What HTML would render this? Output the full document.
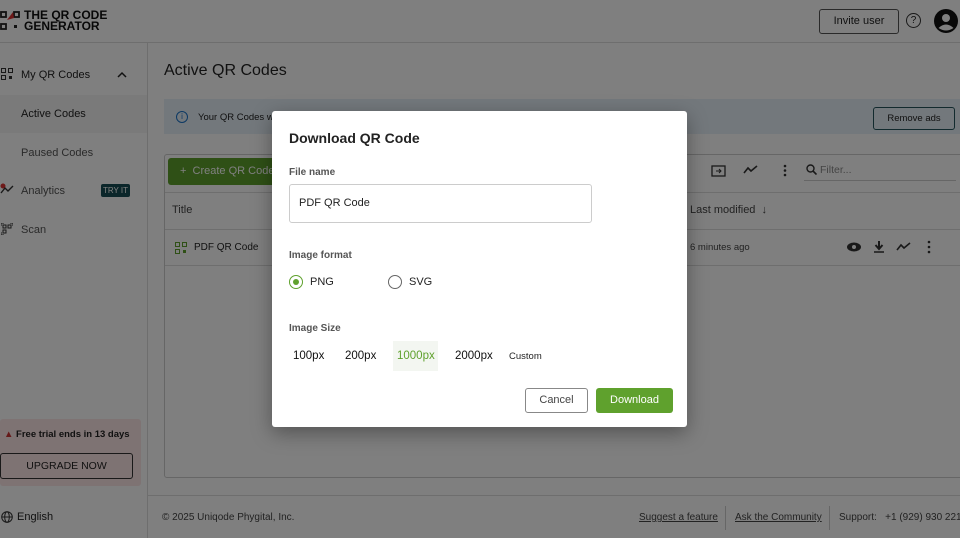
<!DOCTYPE html>
<html><head><meta charset="utf-8"><style>
*{box-sizing:border-box;margin:0;padding:0}
body{width:960px;height:538px;overflow:hidden;font-family:"Liberation Sans",sans-serif;background:#fff;position:relative;color:#222}
.abs{position:absolute;white-space:nowrap}
.hdr{left:0;top:0;width:960px;height:43px;border-bottom:1px solid #ddd}
.side{left:0;top:43px;width:148px;height:495px;border-right:1px solid #ddd}
.foot{left:148px;top:495px;width:812px;height:43px;border-top:1px solid #ddd;font-size:10px;color:#444}
.ov{left:0;top:0;width:960px;height:538px;background:rgba(0,0,0,0.5)}
.modal{left:272px;top:111px;width:415px;height:316px;background:#fff;border-radius:3px;box-shadow:0 6px 20px rgba(0,0,0,.35)}
.lbl{font-size:10px;font-weight:bold;color:#555}
.sz{font-size:11.5px;color:#111}
</style></head><body>
<div class="abs hdr">
 <svg class="abs" style="left:0;top:11px" width="22" height="20" viewBox="0 0 22 20"><rect x="1" y="1" width="5" height="5" fill="none" stroke="#222" stroke-width="1.8"/><rect x="14" y="1" width="5" height="5" fill="none" stroke="#222" stroke-width="1.8"/><rect x="1" y="13" width="5" height="5" fill="none" stroke="#222" stroke-width="1.8"/><rect x="14" y="14" width="3" height="3" fill="#222"/><path d="M7 9 L13 1 L14 7Z" fill="#d33"/></svg>
 <div class="abs" style="left:24px;top:10px;font-size:12px;font-weight:bold;line-height:11px;color:#111">THE QR CODE<br>GENERATOR</div>
 <div class="abs" style="left:819px;top:9px;width:80px;height:25px;border:1px solid #555;border-radius:3px;font-size:11px;text-align:center;line-height:23px">Invite user</div>
 <div class="abs" style="left:906px;top:13px;width:15px;height:15px;border:1.3px solid #333;border-radius:50%;font-size:10px;text-align:center;line-height:13px">?</div>
 <svg class="abs" style="left:934px;top:9px" width="24" height="24" viewBox="0 0 24 24"><circle cx="12" cy="12" r="12" fill="#111"/><circle cx="12" cy="9" r="4" fill="#fff"/><path d="M4.5 19 Q12 12 19.5 19 Q12 24 4.5 19Z" fill="#fff"/></svg>
</div>
<div class="abs side">
 <div class="abs" style="left:21px;top:26px;font-size:11px">My QR Codes</div>
 <svg class="abs" style="left:1px;top:25px" width="12" height="12"><rect x="0.5" y="0.5" width="4" height="4" fill="none" stroke="#333"/><rect x="7.5" y="0.5" width="4" height="4" fill="none" stroke="#333"/><rect x="0.5" y="7.5" width="4" height="4" fill="none" stroke="#333"/><rect x="8" y="8" width="3" height="3" fill="#333"/></svg>
 <svg class="abs" style="left:117px;top:28px" width="10" height="7"><path d="M1 6 L5 2 L9 6" fill="none" stroke="#222" stroke-width="1.5"/></svg>
 <div class="abs" style="left:0;top:52px;width:147px;height:38px;background:#f4f4f4"></div>
 <div class="abs" style="left:21px;top:65px;font-size:11px">Active Codes</div>
 <div class="abs" style="left:21px;top:104px;font-size:11px;color:#555">Paused Codes</div>
 <div class="abs" style="left:21px;top:142px;font-size:11px;color:#555">Analytics</div>
 <div class="abs" style="left:101px;top:141px;width:29px;height:13px;background:#174d54;color:#fff;font-size:8px;text-align:center;line-height:13px;border-radius:2px">TRY IT</div>
 <svg class="abs" style="left:0;top:140px" width="14" height="12"><circle cx="3" cy="3" r="2.5" fill="#d33"/><path d="M1 10 L5 5 L8 8 L13 3" fill="none" stroke="#333" stroke-width="1.4"/></svg>
 <div class="abs" style="left:21px;top:181px;font-size:11px;color:#555">Scan</div>
 <svg class="abs" style="left:1px;top:180px" width="12" height="12"><rect x="2" y="2" width="3" height="3" fill="none" stroke="#333"/><rect x="7" y="2" width="3" height="3" fill="none" stroke="#333"/><rect x="2" y="7" width="3" height="3" fill="none" stroke="#333"/><path d="M0 3V0H3M9 0H12V3M0 9V12H3" fill="none" stroke="#333"/></svg>
 <div class="abs" style="left:0;top:376px;width:141px;height:67px;background:#fde6e6;border-radius:3px"></div>
 <div class="abs" style="left:4px;top:386px;font-size:9.5px;font-weight:bold"><span style="color:#c33">&#9650;</span> Free trial ends in 13 days</div>
 <div class="abs" style="left:0;top:410px;width:133px;height:26px;border:1px solid #333;border-radius:3px;font-size:10.5px;text-align:center;line-height:24px">UPGRADE NOW</div>
 <svg class="abs" style="left:1px;top:468px" width="12" height="12"><circle cx="6" cy="6" r="5.3" fill="none" stroke="#333"/><ellipse cx="6" cy="6" rx="2.3" ry="5.3" fill="none" stroke="#333"/><path d="M0.7 6H11.3" stroke="#333"/></svg>
 <div class="abs" style="left:17px;top:468px;font-size:11px">English</div>
</div>
<div class="abs" style="left:164px;top:62px;font-size:16px">Active QR Codes</div>
<div class="abs" style="left:164px;top:99px;width:796px;height:35px;background:#e6f0f8"></div>
<div class="abs" style="left:176px;top:111px;width:12px;height:12px;border:1.2px solid #1a73c8;border-radius:50%;font-size:8px;color:#1a73c8;text-align:center;line-height:10px">i</div>
<div class="abs" style="left:198px;top:112px;font-size:9.5px">Your QR Codes w</div>
<div class="abs" style="left:873px;top:107px;width:82px;height:23px;border:1px solid #24555c;border-radius:3px;font-size:9.5px;text-align:center;line-height:21px">Remove ads</div>
<div class="abs" style="left:164px;top:154px;width:800px;height:324px;border:1px solid #ccc;border-radius:3px"></div>
<div class="abs" style="left:168px;top:158px;width:110px;height:27px;background:#5fa12d;border-radius:3px;color:#fff;font-size:11px;line-height:27px;padding-left:12px">+ &nbsp;Create QR Code</div>
<div class="abs" style="left:165px;top:192px;width:795px;border-top:1px solid #ddd"></div>
<div class="abs" style="left:172px;top:204px;font-size:11px;color:#444">Title</div>
<div class="abs" style="left:165px;top:229px;width:795px;border-top:1px solid #ddd"></div>
<svg class="abs" style="left:175px;top:242px" width="12" height="12"><rect x="0.5" y="0.5" width="4" height="4" fill="none" stroke="#5fa12d"/><rect x="7.5" y="0.5" width="4" height="4" fill="none" stroke="#5fa12d"/><rect x="0.5" y="7.5" width="4" height="4" fill="none" stroke="#5fa12d"/><rect x="8" y="8" width="3" height="3" fill="#5fa12d"/></svg>
<div class="abs" style="left:194px;top:242px;font-size:10px">PDF QR Code</div>
<div class="abs" style="left:165px;top:265px;width:795px;border-top:1px solid #ddd"></div>
<div class="abs" style="left:690px;top:204px;font-size:11px;color:#444">Last modified &nbsp;&#8595;</div>
<div class="abs" style="left:690px;top:242px;font-size:9.5px;color:#444">6 minutes ago</div>
<svg class="abs" style="left:846px;top:240px" width="92" height="14"><ellipse cx="8" cy="7" rx="7" ry="4.5" fill="#333"/><circle cx="8" cy="7" r="2" fill="#fff"/><path d="M33 1V8M29.5 5L33 9L36.5 5" fill="none" stroke="#333" stroke-width="2"/><path d="M28 12H38" stroke="#333" stroke-width="1.5"/><path d="M51 10L55 5L58 8L64 3" fill="none" stroke="#333" stroke-width="1.6"/><circle cx="83" cy="2" r="1.3" fill="#333"/><circle cx="83" cy="7" r="1.3" fill="#333"/><circle cx="83" cy="12" r="1.3" fill="#333"/></svg>
<svg class="abs" style="left:711px;top:163px" width="80" height="14"><rect x="1" y="3" width="13" height="10" fill="none" stroke="#333" stroke-width="1.3"/><path d="M5 8H10M8 6L10 8L8 10" fill="none" stroke="#333"/><path d="M33 10L37 5L40 8L46 3" fill="none" stroke="#333" stroke-width="1.6"/><circle cx="74" cy="3" r="1.3" fill="#333"/><circle cx="74" cy="7.5" r="1.3" fill="#333"/><circle cx="74" cy="12" r="1.3" fill="#333"/></svg>
<svg class="abs" style="left:806px;top:164px" width="11" height="11"><circle cx="4.5" cy="4.5" r="3.5" fill="none" stroke="#333" stroke-width="1.4"/><path d="M7 7L10.5 10.5" stroke="#333" stroke-width="1.6"/></svg>
<div class="abs" style="left:820px;top:164px;font-size:10.5px;color:#888">Filter...</div>
<div class="abs" style="left:804px;top:180px;width:152px;border-top:1px solid #ccc"></div>
<div class="abs foot">
 <div class="abs" style="left:14px;top:16px">© 2025 Uniqode Phygital, Inc.</div>
 <div class="abs" style="left:491px;top:16px;text-decoration:underline">Suggest a feature</div>
 <div class="abs" style="left:577px;top:10px;height:24px;border-left:1px solid #ccc"></div>
 <div class="abs" style="left:587px;top:16px;text-decoration:underline">Ask the Community</div>
 <div class="abs" style="left:681px;top:10px;height:24px;border-left:1px solid #ccc"></div>
 <div class="abs" style="left:691px;top:16px">Support: &nbsp; +1 (929) 930 2212</div>
</div>
<div class="abs ov"></div>
<div class="abs modal">
 <div class="abs" style="left:17px;top:19px;font-size:14px;font-weight:bold;color:#222">Download QR Code</div>
 <div class="abs lbl" style="left:17px;top:56px">File name</div>
 <div class="abs" style="left:17px;top:73px;width:303px;height:39px;border:1px solid #ccc;border-radius:3px;font-size:11px;line-height:37px;padding-left:9px">PDF QR Code</div>
 <div class="abs lbl" style="left:17px;top:139px">Image format</div>
 <div class="abs" style="left:17px;top:164px;width:14px;height:14px;border:1.5px solid #5fa12d;border-radius:50%"><div style="margin:2.5px;width:6px;height:6px;background:#5fa12d;border-radius:50%"></div></div>
 <div class="abs" style="left:38px;top:165px;font-size:11px">PNG</div>
 <div class="abs" style="left:116px;top:164px;width:14px;height:14px;border:1.5px solid #666;border-radius:50%"></div>
 <div class="abs" style="left:137px;top:165px;font-size:11px">SVG</div>
 <div class="abs lbl" style="left:17px;top:212px">Image Size</div>
 <div class="abs sz" style="left:21px;top:239px">100px</div>
 <div class="abs sz" style="left:73px;top:239px">200px</div>
 <div class="abs" style="left:121px;top:230px;width:45px;height:30px;background:#f3f6f1"></div>
 <div class="abs sz" style="left:125px;top:239px;color:#5fa12d">1000px</div>
 <div class="abs sz" style="left:183px;top:239px">2000px</div>
 <div class="abs" style="left:237px;top:240px;font-size:9.5px">Custom</div>
 <div class="abs" style="left:253px;top:277px;width:63px;height:25px;border:1px solid #888;border-radius:3px;font-size:11px;text-align:center;line-height:23px;color:#444">Cancel</div>
 <div class="abs" style="left:324px;top:277px;width:77px;height:25px;background:#5fa12d;border-radius:3px;font-size:11px;text-align:center;line-height:25px;color:#fff">Download</div>
</div>
</body></html>
